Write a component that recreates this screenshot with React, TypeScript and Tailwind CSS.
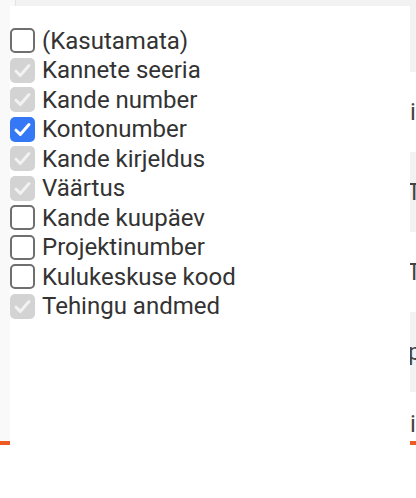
import React from "react";

type State = "off" | "on" | "dis";

const items: { label: string; state: State }[] = [
  { label: "(Kasutamata)", state: "off" },
  { label: "Kannete seeria", state: "dis" },
  { label: "Kande number", state: "dis" },
  { label: "Kontonumber", state: "on" },
  { label: "Kande kirjeldus", state: "dis" },
  { label: "Väärtus", state: "dis" },
  { label: "Kande kuupäev", state: "off" },
  { label: "Projektinumber", state: "off" },
  { label: "Kulukeskuse kood", state: "off" },
  { label: "Tehingu andmed", state: "dis" },
];

function Box({ state }: { state: State }) {
  if (state === "off") {
    return <span className="block w-[25px] h-[25px] shrink-0 rounded-[5px] border-2 border-[#6f6f6f] bg-white" />;
  }
  const bg = state === "on" ? "bg-[#3478f6]" : "bg-[#d3d3d3]";
  const stroke = state === "on" ? "#ffffff" : "#f2f2f2";
  return (
    <span className={`flex w-[25px] h-[25px] shrink-0 rounded-[5px] items-center justify-center ${bg}`}>
      <svg width="25" height="25" viewBox="0 0 25 25">
        <path d="M6 13.2 L10.3 17.4 L19 7.6" fill="none" stroke={stroke} strokeWidth="3" strokeLinecap="round" strokeLinejoin="round" />
      </svg>
    </span>
  );
}

const rows = [
  { cls: "bg-[#f2f2f2] h-[72px] pl-[392px]", t: "" },
  { cls: "bg-white h-[80px] pl-[394px]", t: "info" },
  { cls: "bg-[#f2f2f2] h-[80px] pl-[391px]", t: "Tekst" },
  { cls: "bg-white h-[80px] pl-[391px]", t: "Tekst" },
  { cls: "bg-[#f2f2f2] h-[80px] pl-[392px]", t: "pealkiri" },
  { cls: "bg-white h-[49px] pl-[394px] pt-[14px]", t: "info" },
];

export default function App() {
  return (
    <div className="relative w-[416px] h-[498px] overflow-hidden bg-white" style={{ fontFamily: "Roboto, 'Liberation Sans', sans-serif" }}>
      {/* background page */}
      <div className="flex flex-col">
        <div className="flex h-[441px]">
          <div className="w-[16px] shrink-0 bg-[#f9f9f9] border-r border-[#e4e4e4]" />
          <div className="flex-1 min-w-0 flex flex-col">
            {rows.map((r, i) => (
              <div key={i} className={`${r.cls} flex items-center text-[24px] leading-none text-[#444] overflow-hidden whitespace-nowrap`}>
                {r.t}
              </div>
            ))}
          </div>
        </div>
        <div className="h-[4px] bg-[#ee5a24]" />
      </div>

      {/* popup */}
      <div className="absolute left-[10px] top-[6px] w-[400px] h-[492px] bg-white pt-[20px]">
        <ul className="flex flex-col">
          {items.map((it) => (
            <li key={it.label} className="flex items-center h-[29.5px] gap-[7px] text-[24px] text-[#333] leading-none whitespace-nowrap">
              <Box state={it.state} />
              <span>{it.label}</span>
            </li>
          ))}
        </ul>
      </div>
    </div>
  );
}
